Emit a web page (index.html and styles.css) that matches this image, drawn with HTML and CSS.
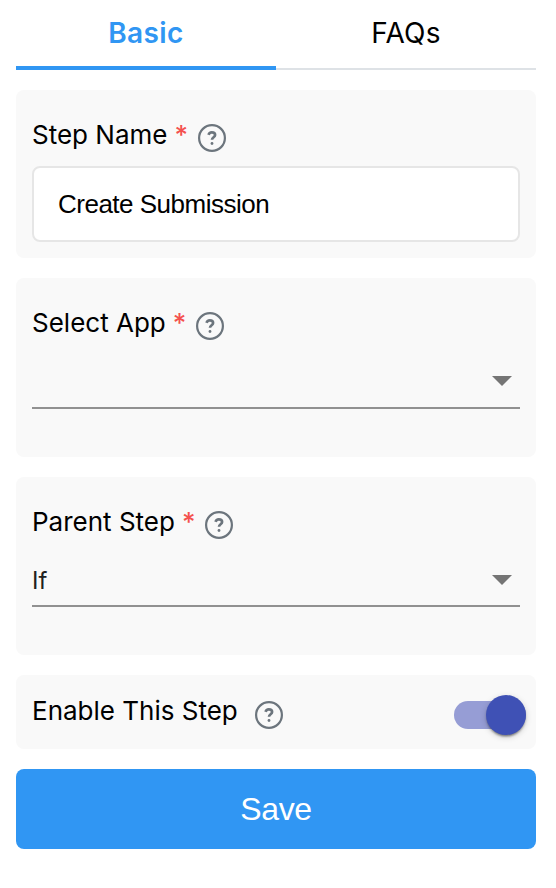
FILE: index.html
```
<!DOCTYPE html>
<html lang="en">
<head>
    <meta charset="UTF-8">
    <meta name="viewport" content="width=device-width, initial-scale=1.0">
    <title>Step Settings</title>
    <link rel="stylesheet" href="styles.css">
</head>
<body>
    <!-- Shared help icon -->
    <svg class="icon-defs" width="0" height="0">
        <symbol id="help" viewBox="0 0 28 28">
            <circle cx="14" cy="14" r="12.9" fill="none" stroke="currentColor" stroke-width="2.2"/>
            <path d="M10.6 10.9C11 9.2 12.1 8.4 13.8 8.4c2 0 3.3 1 3.3 2.6 0 2.3-3.1 2.2-3.1 4.8" fill="none" stroke="currentColor" stroke-width="2.7"/>
            <circle cx="14" cy="19.5" r="1.4" fill="currentColor"/>
        </symbol>
    </svg>

    <div class="tabs">
        <div class="tab active">Basic</div>
        <div class="tab">FAQs</div>
    </div>

    <div class="card name-card">
        <div class="label">
            <span>Step Name</span>
            <span class="required">*</span>
            <svg class="help"><use href="#help"/></svg>
        </div>
        <input type="text" class="text-input" value="Create Submission">
    </div>

    <div class="card app-card">
        <div class="label">
            <span>Select App</span>
            <span class="required">*</span>
            <svg class="help"><use href="#help"/></svg>
        </div>
        <div class="select">
            <span></span>
            <span class="arrow"></span>
        </div>
    </div>

    <div class="card parent-card">
        <div class="label">
            <span>Parent Step</span>
            <span class="required">*</span>
            <svg class="help"><use href="#help"/></svg>
        </div>
        <div class="select">
            <span>If</span>
            <span class="arrow"></span>
        </div>
    </div>

    <div class="card enable-card">
        <div class="label enable-label">
            <span>Enable This Step</span>
            <svg class="help"><use href="#help"/></svg>
        </div>
        <div class="toggle">
            <div class="thumb"></div>
        </div>
    </div>

    <button class="save-btn">Save</button>
</body>
</html>
```

FILE: styles.css
```
* {
    box-sizing: border-box;
}
body {
    margin: 0;
    padding: 0 20px 0 16px;
    background: #fff;
    color: #000;
    font-family: Inter, sans-serif;
    font-size: 26px;
}
.icon-defs {
    display: block;
}
.tabs {
    display: flex;
    height: 70px;
    margin-bottom: 20px;
}
.tab {
    flex: 1;
    height: 70px;
    line-height: 32px;
    padding-top: 17px;
    text-align: center;
    font-size: 28px;
    letter-spacing: 0.2px;
    border-bottom: 2px solid #dee2e6;
}
.tab.active {
    color: #3096f3;
    font-weight: 600;
    letter-spacing: 0.4px;
    border-bottom: 4px solid #3096f3;
}
.card {
    background: #f9f9f9;
    border-radius: 8px;
    padding: 0 16px;
    margin-bottom: 20px;
}
.name-card {
    height: 168px;
    padding-top: 29px;
}
.app-card {
    height: 179px;
    padding-top: 29px;
}
.parent-card {
    height: 178px;
    padding-top: 29px;
}
.label {
    display: flex;
    height: 32px;
    line-height: 32px;
}
.required {
    color: #f4514e;
    margin-left: 7px;
    font-weight: 500;
}
.help {
    width: 28px;
    height: 28px;
    margin: 5px 0 0 10px;
    color: #6c757d;
}
.text-input {
    display: block;
    width: 100%;
    height: 76px;
    margin-top: 15px;
    padding: 0 24px;
    border: 2px solid #e6e6e6;
    border-radius: 8px;
    background: #fff;
    color: #000;
    font-family: "Liberation Sans", Arial, sans-serif;
    font-size: 26px;
    letter-spacing: -0.5px;
    outline: none;
}
.select {
    display: flex;
    justify-content: space-between;
    height: 70px;
    padding-top: 27px;
    line-height: 32px;
    font-size: 24px;
    color: #212121;
    border-bottom: 2px solid #919191;
}
.parent-card .select {
    height: 69px;
}
.arrow {
    width: 20px;
    height: 10px;
    margin: 10px 8px 0 0;
    background: #757575;
    clip-path: polygon(0 0, 100% 0, 50% 100%);
}
.enable-card {
    display: flex;
    justify-content: space-between;
    height: 74px;
    padding: 20px 10px 0 16px;
}
.enable-label .help {
    margin: 6px 0 0 17px;
}
.toggle {
    display: flex;
    justify-content: flex-end;
    align-items: center;
    width: 72px;
    height: 28px;
    margin-top: 6px;
    border-radius: 14px;
    background: #969dd5;
}
.thumb {
    width: 40px;
    height: 40px;
    border-radius: 50%;
    background: #3f51b5;
    box-shadow: 0 3px 2px -2px rgba(0,0,0,0.3), 0 2px 2px rgba(0,0,0,0.2), 0 2px 6px rgba(0,0,0,0.18);
}
.save-btn {
    display: block;
    width: 100%;
    height: 80px;
    padding: 0;
    border: none;
    border-radius: 8px;
    background: #3096f3;
    color: #fff;
    font-family: "Liberation Sans", Arial, sans-serif;
    font-size: 32px;
    letter-spacing: -0.3px;
    cursor: pointer;
}
```
